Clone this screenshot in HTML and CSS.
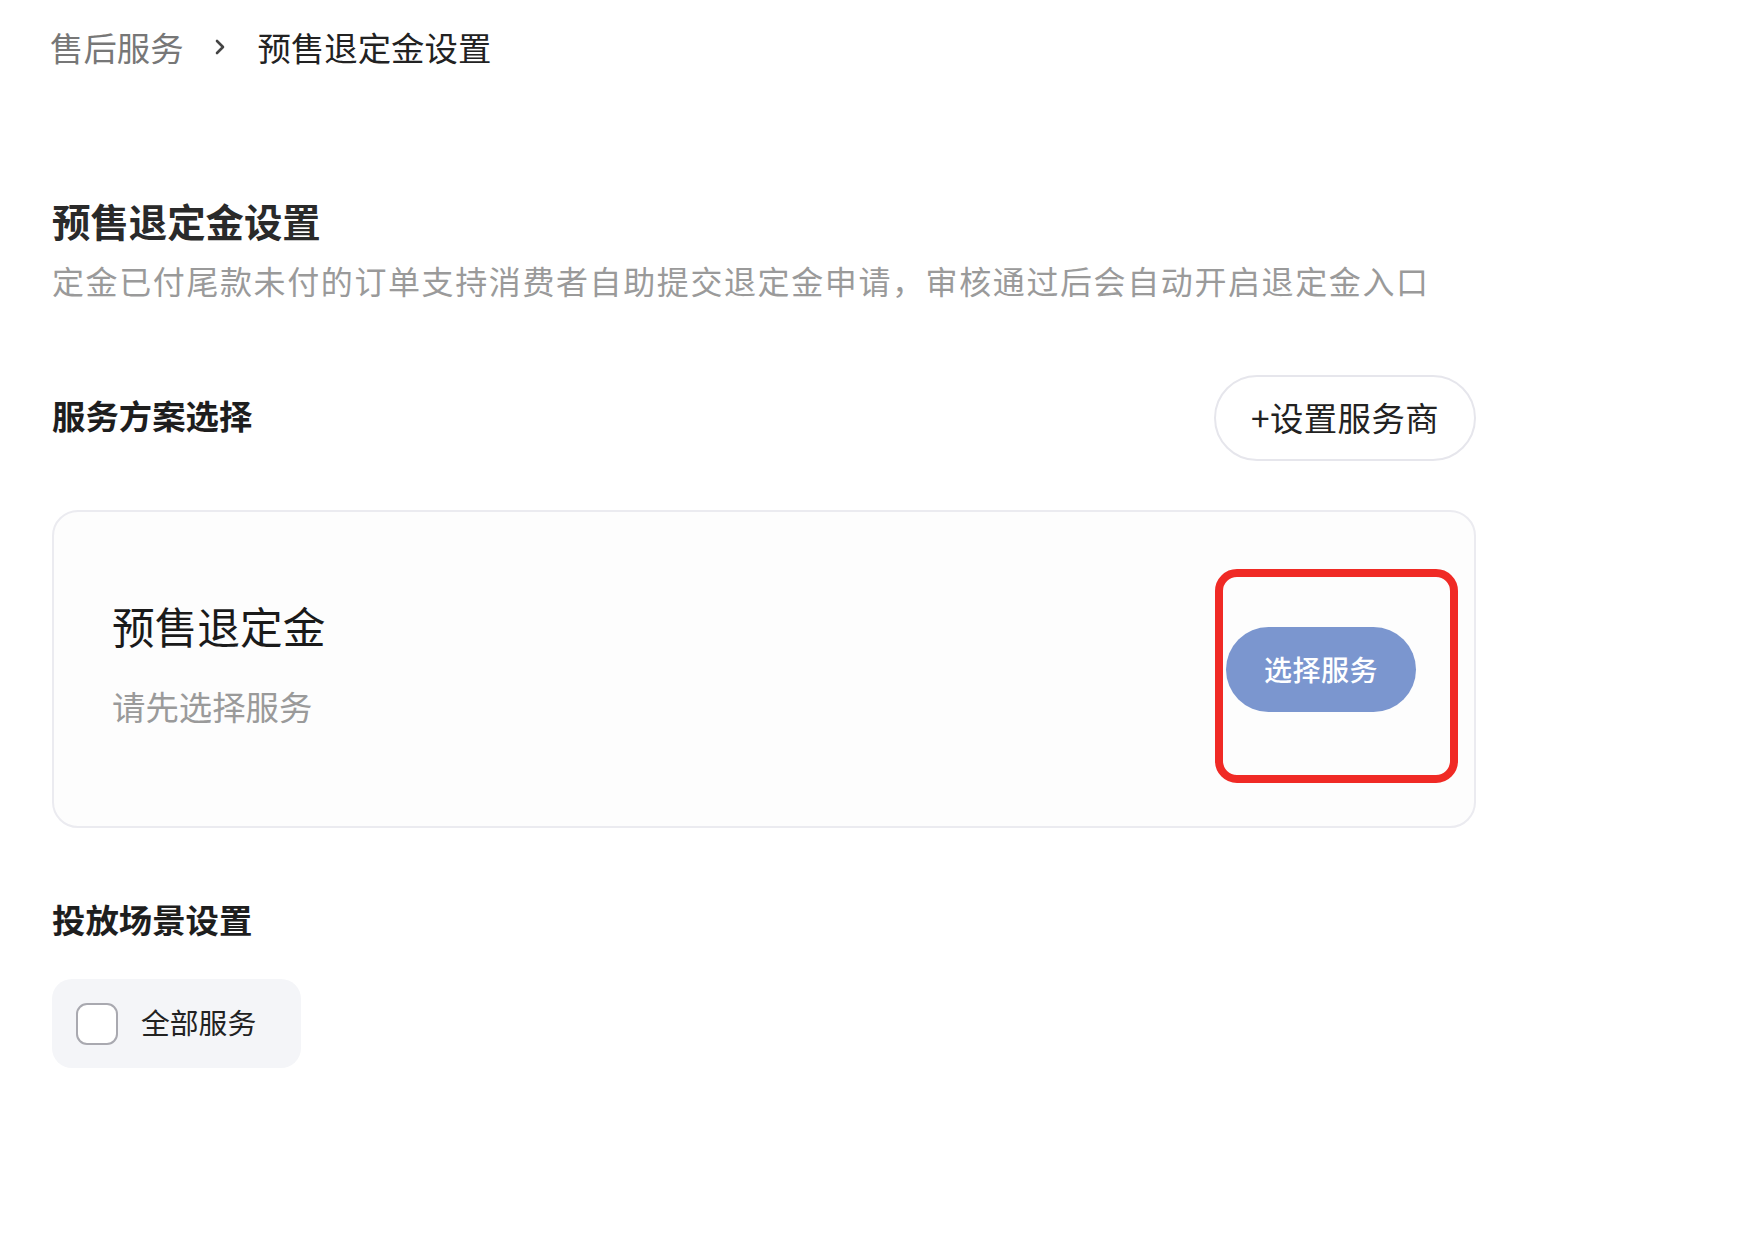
FILE: index.html
```html
<!DOCTYPE html>
<html lang="zh-CN">

<head>
    <meta charset="UTF-8">
    <meta name="viewport" content="width=device-width, initial-scale=1.0">
    <title>预售退定金设置</title>
    <link rel="stylesheet" href="styles.css">
</head>

<body>
    <div class="crumbs">
        <span class="crumb-prev">售后服务</span>
        <svg class="crumb-arrow" width="10" height="16" viewBox="0 0 10 16">
            <path d="M2 2 L8 8 L2 14" fill="none" stroke="#444" stroke-width="2.6" stroke-linecap="round" stroke-linejoin="round"/>
        </svg>
        <span class="crumb-cur">预售退定金设置</span>
    </div>

    <div class="page">
        <h1 class="page-title">预售退定金设置</h1>
        <p class="page-desc">定金已付尾款未付的订单支持消费者自助提交退定金申请，审核通过后会自动开启退定金入口</p>

        <div class="sec-head">
            <h2 class="sec-title">服务方案选择</h2>
            <button class="ghost-btn">+设置服务商</button>
        </div>

        <div class="plan-card">
            <div class="plan-info">
                <div class="plan-name">预售退定金</div>
                <div class="plan-tip">请先选择服务</div>
            </div>
            <div class="pick-wrap">
                <button class="pick-btn">选择服务</button>
                <div class="mark"></div>
            </div>
        </div>

        <h2 class="sec-title scene-title">投放场景设置</h2>

        <label class="check-box">
            <span class="check"></span>
            <span class="check-text">全部服务</span>
        </label>
    </div>
</body>

</html>
```

FILE: styles.css
```css
body {
    margin: 0;
    padding: 0;
    background-color: #ffffff;
    color: #222222;
    font-family: "Noto Sans CJK SC", "Noto Sans", sans-serif;
}

.crumbs {
    display: flex;
    align-items: center;
    padding: 24px 0 0 50px;
    height: 46px;
    font-size: 33.4px;
    line-height: 46px;
}

.crumb-prev {
    color: #777777;
}

.crumb-arrow {
    margin: 0 33px 0 31px;
}

.crumb-cur {
    color: #222222;
}

.page {
    width: 1424px;
    padding-left: 52px;
}

.page-title {
    margin: 125px 0 0;
    font-size: 38.4px;
    line-height: 50px;
    font-weight: 700;
    color: #2a2a2a;
}

.page-desc {
    margin: 12px 0 0;
    font-size: 32px;
    line-height: 46px;
    letter-spacing: 1.6px;
    color: #9a9a9a;
}

.sec-head {
    display: flex;
    justify-content: space-between;
    align-items: center;
    margin-top: 72px;
}

.sec-title {
    margin: 0;
    padding-bottom: 6px;
    font-size: 33.4px;
    line-height: 46px;
    font-weight: 700;
    color: #1e1e1e;
}

.ghost-btn {
    height: 86px;
    padding: 0 35px 4px;
    border: 2px solid #e6e6ec;
    border-radius: 43px;
    background-color: #ffffff;
    font-family: inherit;
    font-size: 33.4px;
    color: #222222;
    letter-spacing: 0.4px;
}

.plan-card {
    display: flex;
    justify-content: space-between;
    align-items: center;
    box-sizing: border-box;
    height: 318px;
    margin-top: 49px;
    padding: 0 58px 0 58px;
    border: 2px solid #ebebf0;
    border-radius: 26px;
    background-color: #fdfdfd;
}

.plan-info {
    padding-bottom: 13px;
}

.plan-name {
    font-size: 42.7px;
    line-height: 56px;
    color: #1a1a1a;
}

.plan-tip {
    margin-top: 30px;
    font-size: 33.4px;
    line-height: 46px;
    color: #9a9a9a;
}

.pick-wrap {
    position: relative;
}

.pick-btn {
    display: block;
    width: 190px;
    height: 85px;
    border: none;
    border-radius: 43px;
    background-color: #7b96cf;
    color: #ffffff;
    font-family: inherit;
    font-size: 28px;
    font-weight: 500;
    letter-spacing: 0.5px;
}

.mark {
    position: absolute;
    left: -11px;
    top: -58px;
    width: 243px;
    height: 214px;
    box-sizing: border-box;
    border: 8px solid #f02a25;
    border-radius: 22px;
}

.scene-title {
    margin-top: 68px;
}

.check-box {
    display: flex;
    align-items: center;
    width: 249px;
    height: 89px;
    box-sizing: border-box;
    margin-top: 31px;
    padding-left: 24px;
    border-radius: 20px;
    background-color: #f4f5f8;
}

.check {
    width: 42px;
    height: 42px;
    box-sizing: border-box;
    border: 2px solid #a9a9b0;
    border-radius: 11px;
    background-color: #ffffff;
}

.check-text {
    margin-left: 23px;
    padding-bottom: 4px;
    font-size: 28.8px;
    color: #222222;
}
```
